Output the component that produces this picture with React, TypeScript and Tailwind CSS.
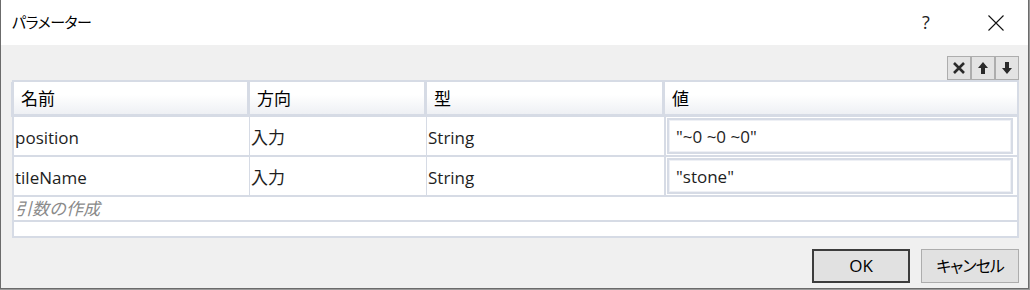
import React from "react";

const font = { fontFamily: '"Open Sans","Noto Sans CJK JP",sans-serif' };

function HeaderCell({ w, children, last }: { w: string; children?: React.ReactNode; last?: boolean }) {
  return (
    <div
      className={`${w} h-full flex items-center pl-[7px] pt-[1px] border-l-[3px] border-[#d6dbe5] bg-gradient-to-b from-white from-40% to-[#eef0f4] text-[17px] text-black ${last ? "flex-1" : ""}`}
    >
      {children}
    </div>
  );
}

function Cell({ w, children, last }: { w: string; children?: React.ReactNode; last?: boolean }) {
  return (
    <div className={`${w} h-full flex items-center pl-[1px] pt-[4px] border-l border-[#d6dbe5] text-[17px] text-[#1e1e1e] ${last ? "flex-1" : ""}`}>
      {children}
    </div>
  );
}

function ValueCell({ children }: { children: React.ReactNode }) {
  return (
    <div className="flex-1 h-full border-l-[2px] border-[#d6dbe5] p-[1px] pr-[4px]">
      <div className="h-full border-[2px] border-[#d6dbe5] bg-white">
        <div className="h-full border border-[#eef0f5] flex items-center pl-[6px] pt-[2px] text-[17px] text-[#1e1e1e]">{children}</div>
      </div>
    </div>
  );
}

export default function App() {
  return (
    <div className="w-[1030px] h-[290px] bg-[#9a9a9a] overflow-hidden" style={font}>
      <div className="w-[1029px] h-[289px] border-l border-r border-b border-[#6b6b6b] flex flex-col bg-[#f0f0f0]">
        {/* Title bar */}
        <div className="h-[45px] bg-white flex items-center shrink-0">
          <div className="pl-[11px] text-[15px] tracking-[-0.5px] text-black flex-1 [font-feature-settings:'palt']">パラメーター</div>
          <div className="w-[46px] text-center text-[18px] text-[#222] mr-[24px]">?</div>
          <div className="w-[46px] h-[45px] flex items-center justify-center mr-[9px]">
            <svg width="16" height="16" viewBox="0 0 16 16">
              <path d="M0.5 0.5 L15.5 15.5 M15.5 0.5 L0.5 15.5" stroke="#111" strokeWidth="1.1" />
            </svg>
          </div>
        </div>
        {/* Body */}
        <div className="flex-1 flex flex-col pl-[11px] pr-[9px]">
          <div className="h-[35px] flex items-end justify-end">
            {[0, 1, 2].map((i) => (
              <div
                key={i}
                className="w-[24px] h-[24px] bg-[#e3e3e3] border border-[#adadad] flex items-center justify-center"
              >
                {i === 0 && (
                  <svg width="14" height="14" viewBox="0 0 14 14">
                    <path d="M2 2 L12 12 M12 2 L2 12" stroke="#2a2a2a" strokeWidth="2.6" />
                  </svg>
                )}
                {i === 1 && (
                  <svg width="12" height="14" viewBox="0 0 12 14">
                    <path d="M6 1 L11 7 L8 7 L8 13 L4 13 L4 7 L1 7 Z" fill="#2a2a2a" />
                  </svg>
                )}
                {i === 2 && (
                  <svg width="12" height="14" viewBox="0 0 12 14">
                    <path d="M6 13 L11 7 L8 7 L8 1 L4 1 L4 7 L1 7 Z" fill="#2a2a2a" />
                  </svg>
                )}
              </div>
            ))}
          </div>
          {/* Grid */}
          <div className="w-[1007px] h-[158px] border-2 border-[#d6dbe5] bg-white flex flex-col">
            <div className="h-[35px] flex border-b-[3px] border-[#d6dbe5] -ml-[3px]">
              <HeaderCell w="w-[236px]">名前</HeaderCell>
              <HeaderCell w="w-[177px]">方向</HeaderCell>
              <HeaderCell w="w-[238px]">型</HeaderCell>
              <HeaderCell w="" last>値</HeaderCell>
            </div>
            {[
              ["position", "入力", "String", '"~0 ~0 ~0"'],
              ["tileName", "入力", "String", '"stone"'],
            ].map((r) => (
              <div key={r[0]} className="h-[40px] flex border-b-2 border-[#d6dbe5] -ml-px">
                <Cell w="w-[236px]">{r[0]}</Cell>
                <Cell w="w-[177px]">{r[1]}</Cell>
                <Cell w="w-[238px]">{r[2]}</Cell>
                <ValueCell>{r[3]}</ValueCell>
              </div>
            ))}
            <div className="h-[25px] flex items-center pl-[1px] border-b-2 border-[#d6dbe5] text-[17px] italic text-[#8a8a8a]">
              引数の作成
            </div>
            <div className="flex-1" />
          </div>
          {/* Buttons */}
          <div className="flex justify-end gap-[11px] mt-[11px]">
            <div className="w-[98px] h-[34px] border-2 border-[#3c3c3c] bg-[#e1e1e1] flex items-center justify-center text-[17px] text-black">
              OK
            </div>
            <div className="w-[98px] h-[34px] border border-[#adadad] bg-[#e1e1e1] flex items-center justify-center text-[16px] tracking-[-1px] text-black [font-feature-settings:'palt']">
              キャンセル
            </div>
          </div>
        </div>
      </div>
    </div>
  );
}
